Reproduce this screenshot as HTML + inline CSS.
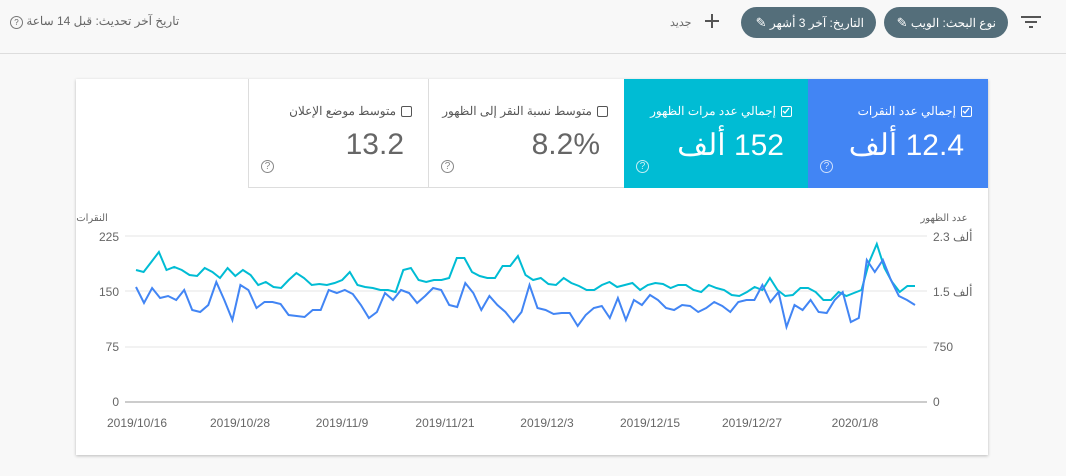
<!DOCTYPE html>
<html><head><meta charset="utf-8"><style>
body{margin:0;width:1066px;height:476px;background:#f8f8f8;font-family:"Liberation Sans","Noto Sans CJK SC",sans-serif;position:relative;overflow:hidden}
.hdr{position:absolute;left:0;top:0;width:1066px;height:53px;border-bottom:1px solid #ddd;background:#f8f8f8}
.pill{position:absolute;top:7px;height:31px;border-radius:16px;background:#546e7a;color:#fff;font-size:12px;line-height:31px;padding:0 12px;direction:rtl;box-sizing:border-box;white-space:nowrap}
.t{position:absolute;font-size:12px;color:#666;direction:rtl;white-space:nowrap}
.card{position:absolute;left:76px;top:79px;width:912px;height:376px;background:#fff;box-shadow:0 1px 3px rgba(0,0,0,.25)}
.m{position:absolute;top:0;height:109px;box-sizing:border-box}
.m .lb{position:absolute;right:16px;top:25px;font-size:12px;direction:rtl;white-space:nowrap}
.m .v{position:absolute;right:24px;top:49px;font-size:30px;direction:rtl;white-space:nowrap}
.cb{display:inline-block;width:11px;height:11px;border:1.5px solid;border-radius:2px;vertical-align:-2px;margin-left:5px;box-sizing:border-box;position:relative}
.cb svg{position:absolute;left:0;top:0}
.q{position:absolute;left:12px;top:81px;width:13px;height:13px;border:1.3px solid;border-radius:50%;font-size:10px;line-height:11px;text-align:center;box-sizing:border-box}
</style></head><body>
<div class="hdr">
<svg style="position:absolute;left:1021px;top:15px" width="20" height="14"><path d="M0 2h20M4 7h12M8 12h4" stroke="#555" stroke-width="2"/></svg>
<div class="pill" style="left:884px;width:124px">نوع البحث: الويب <span style="font-size:13px">✎</span></div>
<div class="pill" style="left:741px;width:135px">التاريخ: آخر 3 أشهر <span style="font-size:13px">✎</span></div>
<svg style="position:absolute;left:705px;top:14px" width="14" height="14"><path d="M7 0v14M0 7h14" stroke="#555" stroke-width="2"/></svg>
<div class="t" style="left:670px;top:16px;font-size:11px">جديد</div>
<div class="t" style="left:10px;top:14px">تاريخ آخر تحديث: قبل 14 ساعة <span style="display:inline-block;width:11px;height:11px;border:1px solid #777;border-radius:50%;font-size:8px;line-height:11px;text-align:center">?</span></div>
</div>
<div class="card">
<div class="m" style="left:732px;width:180px;background:#4285f4;color:#fff"><div class="lb"><span class="cb" style="border-color:#fff"><svg width="8" height="8"><path d="M1 4l2 2 4-5" stroke="#fff" stroke-width="1.3" fill="none"/></svg></span>إجمالي عدد النقرات</div><div class="v">12.4 ألف</div><div class="q" style="border-color:#cfe0fc;color:#cfe0fc">?</div></div>
<div class="m" style="left:548px;width:184px;background:#00bcd4;color:#fff"><div class="lb"><span class="cb" style="border-color:#fff"><svg width="8" height="8"><path d="M1 4l2 2 4-5" stroke="#fff" stroke-width="1.3" fill="none"/></svg></span>إجمالي عدد مرات الظهور</div><div class="v">152 ألف</div><div class="q" style="border-color:#c6eff5;color:#c6eff5">?</div></div>
<div class="m" style="left:352px;width:196px;border-left:1px solid #ddd;border-bottom:1px solid #ddd;color:#555"><div class="lb"><span class="cb" style="border-color:#555"></span>متوسط نسبة النقر إلى الظهور</div><div class="v" style="color:#666">8.2%</div><div class="q" style="border-color:#888;color:#888">?</div></div>
<div class="m" style="left:172px;width:180px;border-left:1px solid #ddd;border-bottom:1px solid #ddd;color:#555"><div class="lb"><span class="cb" style="border-color:#555"></span>متوسط موضع الإعلان</div><div class="v" style="color:#666">13.2</div><div class="q" style="border-color:#888;color:#888">?</div></div>
</div>
<svg id="ch" style="position:absolute;left:0;top:0" width="1066" height="476" font-family="Liberation Sans, Noto Sans CJK SC, sans-serif" font-size="12" fill="#666">
<g stroke="#e6e6e6"><line x1="125" x2="927" y1="236" y2="236"/><line x1="125" x2="927" y1="291" y2="291"/><line x1="125" x2="927" y1="347" y2="347"/></g>
<line x1="125" x2="927" y1="402" y2="402" stroke="#999"/>
<text x="92" y="221" font-size="10" text-anchor="middle">النقرات</text>
<text x="119" y="241" text-anchor="end">225</text><text x="119" y="296" text-anchor="end">150</text><text x="119" y="351" text-anchor="end">75</text><text x="119" y="406" text-anchor="end">0</text>
<text x="944" y="221" font-size="10" text-anchor="middle">عدد الظهور</text>
<text x="933" y="241">2.3 ألف</text><text x="933" y="296">1.5 ألف</text><text x="933" y="351">750</text><text x="933" y="406">0</text>
<g text-anchor="middle"><text x="137" y="427">2019/10/16</text><text x="240" y="427">2019/10/28</text><text x="342" y="427">2019/11/9</text><text x="445" y="427">2019/11/21</text><text x="547" y="427">2019/12/3</text><text x="650" y="427">2019/12/15</text><text x="752" y="427">2019/12/27</text><text x="855" y="427">2020/1/8</text></g>
<polyline id="tl" fill="none" stroke="#00bcd4" stroke-width="2"/>
<polyline id="bl" fill="none" stroke="#4285f4" stroke-width="2"/>
</svg>
<script>
var T=[270,272,262,252,270,267,270,275,276,268,272,278,268,276,270,275,285,282,287,288,280,273,278,285,284,285,283,280,272,285,287,288,290,290,292,270,268,280,282,280,280,278,258,258,272,276,278,278,266,266,256,275,280,278,284,285,278,283,286,290,290,285,282,287,285,283,290,285,283,284,288,285,285,290,292,285,288,290,295,296,292,287,290,278,290,296,295,288,288,292,300,300,292,296,293,290,262,244,268,282,292,286,286];
var B=[287,303,288,298,296,300,290,310,312,305,282,300,320,285,290,308,302,302,304,315,316,317,310,310,290,293,290,294,305,318,312,293,300,290,293,303,296,288,290,305,307,283,293,310,296,305,312,322,312,285,308,310,314,313,313,326,315,308,306,318,298,320,300,305,295,300,308,310,305,306,312,308,302,306,312,302,300,300,285,302,292,327,305,310,300,312,313,300,292,322,318,260,272,260,280,296,300,305];
function p(a){var x0=136,x1=915,s=(x1-x0)/(a.length-1);return a.map(function(y,i){return (x0+i*s).toFixed(1)+','+y}).join(' ')}
document.getElementById('tl').setAttribute('points',p(T));
document.getElementById('bl').setAttribute('points',p(B));
</script>
</body></html>
